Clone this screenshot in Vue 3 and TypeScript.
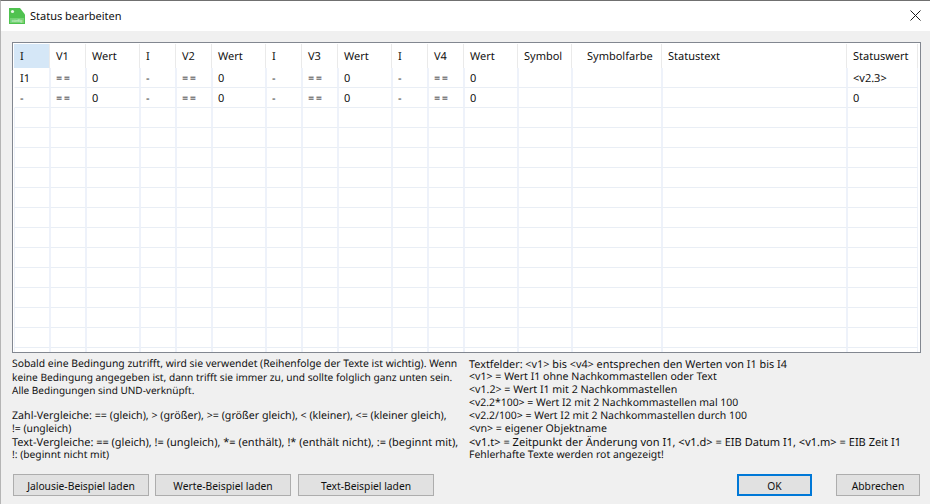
<script setup lang="ts">
const cols = [36, 36, 54, 36, 36, 54, 36, 36, 54, 36, 36, 54, 54, 90, 185, 71]
const headers = ['I', 'V1', 'Wert', 'I', 'V2', 'Wert', 'I', 'V3', 'Wert', 'I', 'V4', 'Wert', 'Symbol', 'Symbolfarbe', 'Statustext', 'Statuswert']
const rows: string[][] = [
  ['I1', '==', '0', '-', '==', '0', '-', '==', '0', '-', '==', '0', '', '', '', '<v2.3>'],
  ['-', '==', '0', '-', '==', '0', '-', '==', '0', '-', '==', '0', '', '', '', '0'],
  ...Array.from({ length: 14 }, () => Array(16).fill('') as string[]),
]
const gridCols = cols.map((c) => c + 'px').join(' ')
const leftText: [string, number][] = [
  ['Sobald eine Bedingung zutrifft, wird sie verwendet (Reihenfolge der Texte ist wichtig). Wenn', 10.35],
  ['keine Bedingung angegeben ist, dann trifft sie immer zu, und sollte folglich ganz unten sein.', 10.16],
  ['Alle Bedingungen sind UND-verknüpft.', 10.03],
  ['\u00a0', 10.7],
  ['Zahl-Vergleiche: == (gleich), > (größer), >= (größer gleich), < (kleiner), <= (kleiner gleich),', 10.67],
  ['!= (ungleich)', 10.36],
  ['Text-Vergleiche: == (gleich), != (ungleich), *= (enthält), !* (enthält nicht), := (beginnt mit),', 10.97],
  ['!: (beginnt nicht mit)', 10.28],
]
const rightText: [string, number][] = [
  ['Textfelder: <v1> bis <v4> entsprechen den Werten von I1 bis I4', 10.84],
  ['<v1> = Wert I1 ohne Nachkommastellen oder Text', 10.6],
  ['<v1.2> = Wert I1 mit 2 Nachkommastellen', 10.65],
  ['<v2.2*100> = Wert I2 mit 2 Nachkommastellen mal 100', 10.43],
  ['<v2.2/100> = Wert I2 mit 2 Nachkommastellen durch 100', 10.44],
  ['<vn> = eigener Objektname', 10.62],
  ['<v1.t> = Zeitpunkt der Änderung von I1, <v1.d> = EIB Datum I1, <v1.m> = EIB Zeit I1', 11.06],
  ['Fehlerhafte Texte werden rot angezeigt!', 10.43],
]
</script>

<template>
  <div class="window">
    <header class="titlebar">
      <svg class="logo" width="16" height="16" viewBox="0 0 16 16">
        <path d="M0 0H11L16 6.5V16H0Z" fill="#4fc24f" />
        <rect x="1" y="10" width="14" height="5" fill="#74d274" />
        <circle cx="3.5" cy="3.5" r="1.6" fill="#e8f8e8" />
        <text x="8" y="14.2" font-size="4" text-anchor="middle" fill="#e6f7e6" font-family="Liberation Sans, sans-serif">config</text>
      </svg>
      <span class="title">Status bearbeiten</span>
      <svg class="close" width="11" height="11" viewBox="0 0 11 11">
        <path d="M0.5 0.5L10.5 10.5M10.5 0.5L0.5 10.5" stroke="#1a1a1a" stroke-width="1" fill="none" />
      </svg>
    </header>
    <main class="body">
      <section class="frame">
        <div class="grid" :style="{ gridTemplateColumns: gridCols }">
          <div v-for="(h, i) in headers" :key="'h' + i" class="hcell" :class="{ sel: i === 0, shift: i === 13 }">{{ h }}</div>
          <template v-for="(r, ri) in rows" :key="ri">
            <div
              v-for="(c, ci) in r"
              :key="ci"
              class="cell"
              :class="{ eq: c === '==', first: ci === 0 && ri < 2 }"
            >{{ c }}</div>
          </template>
        </div>
      </section>
      <section class="help">
        <div class="col-left"><div v-for="(l, i) in leftText" :key="i" :style="{ fontSize: l[1] + 'px' }">{{ l[0] }}</div></div>
        <div class="col-right"><div v-for="(l, i) in rightText" :key="i" :style="{ fontSize: l[1] + 'px' }">{{ l[0] }}</div></div>
      </section>
      <footer class="actions">
        <button class="btn ex first-ex">Jalousie-Beispiel laden</button>
        <button class="btn ex">Werte-Beispiel laden</button>
        <button class="btn ex">Text-Beispiel laden</button>
        <span class="spacer"></span>
        <button class="btn ok">OK</button>
        <button class="btn cancel">Abbrechen</button>
      </footer>
    </main>
  </div>
</template>

<style scoped>
.window {
  width: 930px;
  height: 504px;
  box-sizing: border-box;
  border-top: 1px solid #707070;
  border-left: 1px solid #b5b5b5;
  background: #f0f0f0;
  font-family: "Noto Sans", sans-serif;
  font-size: 11px;
  color: #101010;
  text-rendering: geometricPrecision;
  display: flex;
  flex-direction: column;
  overflow: hidden;
}
.titlebar {
  height: 30px;
  flex: none;
  box-sizing: border-box;
  background: #fff;
  display: flex;
  align-items: center;
  padding: 0 9px 1px 8px;
}
.logo { flex: none; margin-right: 5px; }
.title { font-size: 11px; flex: 1; margin-top: 2px; }
.close { flex: none; }
.body {
  flex: 1;
  display: flex;
  flex-direction: column;
  padding: 11px 9px 7px 11px;
  min-height: 0;
}
.frame {
  height: 311px;
  flex: none;
  box-sizing: border-box;
  border: 1px solid #828790;
  background: #fff;
  padding: 1px;
  overflow: hidden;
}
.grid { display: grid; grid-auto-rows: 20px; grid-template-rows: 24px; }
.hcell {
  box-sizing: border-box;
  padding: 5px 0 0 6px;
  white-space: nowrap;
  border-right: 1px solid #eaeaea;
}
.sel { background: #d5e7f7; }
.shift { padding-left: 15px; }
.cell {
  box-sizing: border-box;
  padding: 3px 0 0 5px;
  white-space: nowrap;
  border-left: 1px solid #eef2fa;
  border-right: 1px solid #eef2fa;
  border-bottom: 1px solid #e9eef5;
}
.first { border-left-color: transparent; }
.eq { letter-spacing: 1.5px; }
.help {
  display: flex;
  flex: none;
  margin-top: 5px;
  line-height: 13px;
}
.col-left { width: 457px; white-space: nowrap; }
.col-right { white-space: nowrap; }
.actions { display: flex; flex: none; margin-top: 12px; padding: 0 1px; }
.btn {
  height: 22px;
  box-sizing: border-box;
  background: #e1e1e1;
  border: 1px solid #adadad;
  font: inherit;
  font-size: 10.3px;
  color: inherit;
  padding: 1px 0 0;
}
.ex { width: 136px; margin-right: 7px; }
.first-ex { margin-right: 6px; }
.spacer { flex: 1; }
.ok { width: 75px; border: 2px solid #0078d7; margin-right: 24px; }
.cancel { width: 84px; }
</style>
